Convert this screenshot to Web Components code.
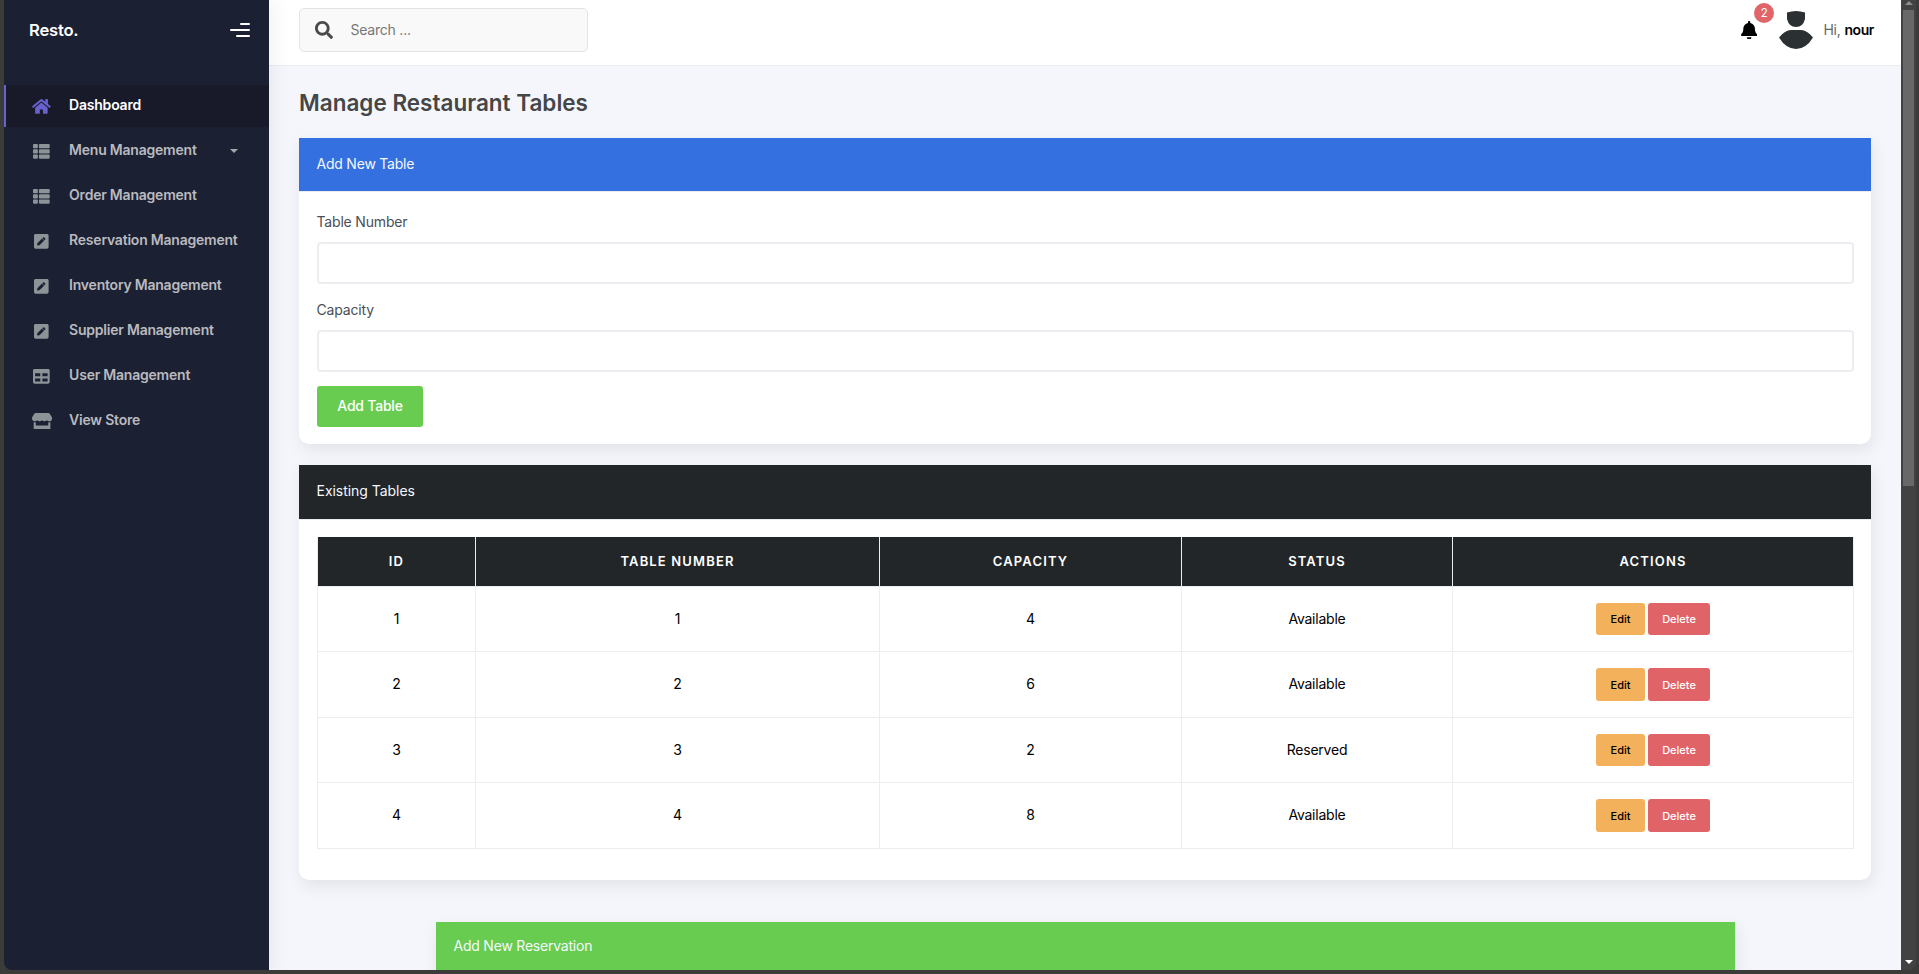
<!DOCTYPE html>
<html lang="en">
<head>
<meta charset="utf-8">
<title>Resto.</title>
<style>
  html, body { margin: 0; height: 100%; overflow: hidden; }
  body { background: #3b3b3a; font: 14px/20px Inter, "Liberation Sans", sans-serif; letter-spacing: -0.22px; color: #000; }
</style>
</head>
<body>
<resto-app></resto-app>
<script>
const ICONS = {
  home: [576, 'M280.37 148.26L96 300.11V464a16 16 0 0 0 16 16l112.06-.29a16 16 0 0 0 15.92-16V368a16 16 0 0 1 16-16h64a16 16 0 0 1 16 16v95.64a16 16 0 0 0 16 16.05L464 480a16 16 0 0 0 16-16V300L295.67 148.26a12.19 12.19 0 0 0-15.3 0zM571.6 251.47L488 182.56V44.05a12 12 0 0 0-12-12h-56a12 12 0 0 0-12 12v72.61L318.47 43a48 48 0 0 0-61 0L4.34 251.47a12 12 0 0 0-1.6 16.9l25.5 31A12 12 0 0 0 45.15 301l235.22-193.74a12.19 12.19 0 0 1 15.3 0L530.9 301a12 12 0 0 0 16.9-1.6l25.5-31a12 12 0 0 0-1.7-16.93z'],
  list: [512, 'M149.333 216v80c0 13.255-10.745 24-24 24H24c-13.255 0-24-10.745-24-24v-80c0-13.255 10.745-24 24-24h101.333c13.255 0 24 10.745 24 24zM0 376v80c0 13.255 10.745 24 24 24h101.333c13.255 0 24-10.745 24-24v-80c0-13.255-10.745-24-24-24H24c-13.255 0-24 10.745-24 24zM125.333 32H24C10.745 32 0 42.745 0 56v80c0 13.255 10.745 24 24 24h101.333c13.255 0 24-10.745 24-24V56c0-13.255-10.745-24-24-24zm80 448H488c13.255 0 24-10.745 24-24v-80c0-13.255-10.745-24-24-24H205.333c-13.255 0-24 10.745-24 24v80c0 13.255 10.745 24 24 24zm-24-424v80c0 13.255 10.745 24 24 24H488c13.255 0 24-10.745 24-24V56c0-13.255-10.745-24-24-24H205.333c-13.255 0-24 10.745-24 24zm24 264H488c13.255 0 24-10.745 24-24v-80c0-13.255-10.745-24-24-24H205.333c-13.255 0-24 10.745-24 24v80c0 13.255 10.745 24 24 24z'],
  pen: [448, 'M400 480H48c-26.5 0-48-21.5-48-48V80c0-26.5 21.5-48 48-48h352c26.5 0 48 21.5 48 48v352c0 26.5-21.5 48-48 48zM238.1 177.9L102.4 313.6l-6.3 57.1c-.8 7.6 5.6 14.1 13.3 13.3l57.1-6.3L302.2 242c2.3-2.3 2.3-6.1 0-8.5L246.7 178c-2.5-2.4-6.3-2.4-8.6-.1zM345 165.1L314.9 135c-9.4-9.4-24.6-9.4-33.9 0l-23.1 23.1c-2.3 2.3-2.3 6.1 0 8.5l55.5 55.5c2.3 2.3 6.1 2.3 8.5 0L345 199c9.3-9.3 9.3-24.5 0-33.9z'],
  table: [512, 'M464 32H48C21.49 32 0 53.49 0 80v352c0 26.51 21.49 48 48 48h416c26.51 0 48-21.49 48-48V80c0-26.51-21.49-48-48-48zM224 416H64v-96h160v96zm0-160H64v-96h160v96zm224 160H288v-96h160v96zm0-160H288v-96h160v96z'],
  store: [616, 'M602 118.6L537.1 15C531.3 5.7 521 0 510 0H106C95 0 84.7 5.7 78.9 15L14 118.6c-33.5 53.5-3.8 127.9 58.8 136.4 4.5.6 9.1.9 13.7.9 29.6 0 55.8-13 73.8-33.1 18 20.1 44.3 33.1 73.8 33.1 29.6 0 55.8-13 73.8-33.1 18 20.1 44.3 33.1 73.8 33.1 29.6 0 55.8-13 73.8-33.1 18.1 20.1 44.3 33.1 73.8 33.1 4.7 0 9.2-.3 13.7-.9 62.8-8.4 92.6-82.8 59-136.4zM529.5 288c-10 0-19.9-1.5-29.5-3.8V384H116v-99.8c-9.6 2.2-19.5 3.8-29.5 3.8-6 0-12.1-.4-18-1.2-5.6-.8-11.1-2.1-16.4-3.6V480c0 17.7 14.3 32 32 32h448c17.7 0 32-14.3 32-32V283.2c-5.4 1.6-10.8 2.9-16.4 3.6-6.1.8-12.1 1.2-18.2 1.2z'],
  search: [512, 'M505 442.7L405.3 343c-4.5-4.5-10.6-7-17-7H372c27.6-35.3 44-79.7 44-128C416 93.1 322.9 0 208 0S0 93.1 0 208s93.1 208 208 208c48.3 0 92.7-16.4 128-44v16.3c0 6.4 2.5 12.5 7 17l99.7 99.7c9.4 9.4 24.6 9.4 33.9 0l28.3-28.3c9.4-9.4 9.4-24.6.1-34zM208 336c-70.7 0-128-57.2-128-128 0-70.7 57.2-128 128-128 70.7 0 128 57.2 128 128 0 70.7-57.2 128-128 128z'],
  bell: [448, 'M224 512c35.32 0 63.97-28.65 63.97-64H160.03c0 35.35 28.65 64 63.97 64zm215.39-149.71c-19.32-20.76-55.47-51.99-55.47-154.29 0-77.7-54.48-139.9-127.94-155.16V32c0-17.67-14.32-32-31.98-32s-31.98 14.33-31.98 32v20.84C118.56 68.1 64.08 130.3 64.08 208c0 102.3-36.15 133.53-55.47 154.29-6 6.45-8.66 14.16-8.61 21.71.11 16.4 12.98 32 32.1 32h383.8c19.12 0 32-15.6 32.1-32 .05-7.55-2.61-15.27-8.61-21.71z']
};

function define(name, html) {
  customElements.define(name, class extends HTMLElement {
    connectedCallback() {
      if (this.shadowRoot) return;
      const root = this.attachShadow({ mode: 'open' });
      root.innerHTML = typeof html === 'function' ? html(this) : html;
    }
  });
}

define('resto-icon', el => {
  const [w, d] = ICONS[el.getAttribute('name')];
  const s = parseFloat(el.getAttribute('size') || 16.7);
  return `<style>:host{display:inline-flex;flex:none}svg{display:block;fill:currentColor}</style>
  <svg width="${(w / 512 * s).toFixed(2)}" height="${s}" viewBox="0 0 ${w} 512"><path d="${d}"/></svg>`;
});

define('nav-item', el => `<style>
  :host{display:flex;align-items:center;height:42px;margin-bottom:3px;box-sizing:border-box;border-left:2px solid transparent;padding-left:21.7px;color:#b9babf;font-weight:600;letter-spacing:-0.22px}
  :host([active]){background:#181a2a;border-color:#6861ce;color:#fff}
  .i{width:28px;display:flex;justify-content:center;color:#8d9498;margin-right:13.4px}
  :host([active]) .i{color:#6861ce}
  .t{flex:1;padding-bottom:3px}
  .c{width:0;height:0;border:4px solid transparent;border-top-color:#a5a7ad;border-bottom:0;margin-right:31px;margin-bottom:1px}
</style><div class="i"><resto-icon name="${el.getAttribute('icon')}"></resto-icon></div><div class="t"><slot></slot></div>${el.hasAttribute('more') ? '<div class="c"></div>' : ''}`);

define('side-bar', `<style>
  :host{display:block;width:265px;flex:none;background:#1c2033;border-radius:0 0 0 8px;box-shadow:2px 0 20px rgba(69,65,78,.09);z-index:1}
  header{display:flex;align-items:center;justify-content:space-between;height:60px;padding:0 19px 0 25px;margin-bottom:25px;color:#fff;font-weight:600;font-size:16.6px;letter-spacing:-0.2px}
  .m{display:flex;flex-direction:column;align-items:flex-end;gap:4px;height:14px}
  .m i{height:2px;background:#fff;border-radius:1px}
</style>
<header><span>Resto.</span><div class="m"><i style="width:10px"></i><i style="width:20px"></i><i style="width:14px"></i></div></header>
<nav>
<nav-item icon="home" active>Dashboard</nav-item>
<nav-item icon="list" more>Menu Management</nav-item>
<nav-item icon="list">Order Management</nav-item>
<nav-item icon="pen">Reservation Management</nav-item>
<nav-item icon="pen">Inventory Management</nav-item>
<nav-item icon="pen">Supplier Management</nav-item>
<nav-item icon="table">User Management</nav-item>
<nav-item icon="store">View Store</nav-item>
</nav>`);

define('top-bar', `<style>
  :host{display:flex;justify-content:space-between;box-sizing:border-box;background:#fff;border-bottom:1px solid #ecedf1;padding:8px 27px 0 30px;height:66px}
  .s{display:flex;align-items:center;box-sizing:border-box;width:289px;height:44px;background:#f9f9f9;border:1px solid #e4e4e4;border-radius:5px;padding-left:15px;color:#777}
  .s resto-icon{color:#4a4a48;margin-right:17.5px}
  .u{display:flex;align-items:center;height:44px}
  .b{display:flex;position:relative;margin-right:22.5px}
  .n{position:absolute;left:13.5px;top:-17.5px;width:20px;height:20px;border-radius:50%;background:#e06468;color:#fff;font-size:11.5px;line-height:20px;text-align:center;letter-spacing:0}
  .a{display:block;margin-right:10px}
  .h{letter-spacing:-.2px;color:#666}
  b{font-weight:600;color:#000;letter-spacing:-.4px}
</style>
<div class="s"><resto-icon name="search" size="18"></resto-icon><span>Search ...</span></div>
<div class="u"><div class="b"><resto-icon name="bell" size="18.6"></resto-icon><span class="n">2</span></div>
<svg class="a" width="34" height="40" viewBox="0 0 34 40" fill="#2b3033"><path d="M8 2.6Q17 -.4 26 2.6V9Q24 17 17 17Q10 17 8 9Z"/><path d="M0 27.5Q6 20 12 20H22Q28 20 34 27.5Q27 39 17 39Q7 39 0 27.5Z"/></svg>
<span class="h">Hi, <b>nour</b></span></div>`);

define('data-card', el => `<style>
  :host{display:block;background:#fff;border-radius:0 0 10px 10px;box-shadow:2px 6px 15px rgba(69,65,78,.1);box-sizing:border-box}
  header{height:54px;box-sizing:border-box;padding:15.5px 17.5px 0;border-bottom:1px solid #ebecec;color:#f4f8ff;background:${el.getAttribute('color')};background-clip:padding-box}
  :host(.c2) header{height:55px;letter-spacing:-.04px}
  :host(.c3) header{padding-top:13.5px}
  div{padding:17px 17px 0 18px}
</style><header>${el.getAttribute('heading')}</header><div><slot></slot></div>`);

define('form-field', el => `<style>
  :host{display:block}label{display:block;height:33px;padding-top:3px;box-sizing:border-box;color:#495057;margin-left:-.5px;letter-spacing:-.18px}
  input{display:block;width:100%;height:42px;box-sizing:border-box;border:2px solid #ebedf0;border-radius:4px;background:#fff;outline:0}
</style><label>${el.getAttribute('label')}</label><input>`);

define('ui-button', `<style>
  :host{display:inline-flex;align-items:center;justify-content:center;box-sizing:border-box;border-radius:3px;font-weight:500;color:#fff;background:#68cc50;width:106px;height:41px;padding-bottom:1.5px}
  :host([kind=edit]),:host([kind=delete]){font-size:11px;letter-spacing:0;height:32.5px;width:49px;padding:0}
  :host([kind=edit]){background:#f3b15c;color:#000}
  :host([kind=delete]){background:#e06467;width:62px}
</style><slot></slot>`);

define('tables-grid', () => {
  const rows = [[1, 1, 4, 'Available'], [2, 2, 6, 'Available'], [3, 3, 2, 'Reserved'], [4, 4, 8, 'Available']];
  return `<style>
  :host{display:block}
  .r{display:grid;grid-template-columns:158px 404px 302px 271px 401px;height:65px;border-left:1px solid #ebedef;width:1536px}
  .r:nth-of-type(odd){height:66px}
  .r>*{display:flex;align-items:center;justify-content:center;gap:3px;box-sizing:border-box;border-right:1px solid #ebedef;border-bottom:1px solid #ebedef;height:100%}
  .r>span{padding-bottom:.5px}
  .r.h{height:50px}
  .h>span{background:#222629;background-clip:padding-box;color:#fff;font-size:13px;font-weight:600;letter-spacing:1.15px;padding-bottom:1px}
</style><div class="r h">${['ID', 'TABLE NUMBER', 'CAPACITY', 'STATUS', 'ACTIONS'].map(t => `<span>${t}</span>`).join('')}</div>` +
  rows.map(r => `<div class="r">${r.map(c => `<span>${c}</span>`).join('')}<div><ui-button kind="edit">Edit</ui-button><ui-button kind="delete">Delete</ui-button></div></div>`).join('');
});

define('page-scrollbar', `<style>
  :host{display:flex;flex-direction:column;align-items:center;width:15px;flex:none;background:#424242;border-radius:0 0 8px 0;box-sizing:border-box;padding:1px 0 6px}
  .u,.d{width:0;height:0;border:4px solid transparent}
  .u{border-top:0;border-bottom-color:#8c8c8c;margin-bottom:5px}
  .d{border-bottom:0;border-top-color:#fff;margin-top:auto}
  .t{width:11px;height:476px;background:#686868}
</style><i class="u"></i><i class="t"></i><i class="d"></i>`);

define('resto-app', `<style>
  :host{display:flex;height:970px;width:1912px;margin-left:4px;overflow:hidden}
  main{width:1632px;flex:none;background:#f5f6fb;overflow:hidden}
  h1{margin:21px 0 20px 30px;font-size:22.5px;line-height:31px;font-weight:600;letter-spacing:0;color:#444647}
  .c1,.c2{width:1572px;margin-left:30px}
  .c1{height:306px;margin-bottom:21px}
  .c2{height:415px;margin-bottom:42px}
  .c3{width:1299px;margin-left:167px;height:300px}
  form-field{margin-bottom:13px}
  ui-button{margin-top:1px}
</style>
<side-bar></side-bar>
<main>
<top-bar></top-bar>
<h1>Manage Restaurant Tables</h1>
<data-card class="c1" heading="Add New Table" color="#3570e0">
<form-field label="Table Number"></form-field>
<form-field label="Capacity"></form-field>
<ui-button>Add Table</ui-button>
</data-card>
<data-card class="c2" heading="Existing Tables" color="#222629"><tables-grid></tables-grid></data-card>
<data-card class="c3" heading="Add New Reservation" color="#68cc50"></data-card>
</main>
<page-scrollbar></page-scrollbar>`);
</script>
</body>
</html>
